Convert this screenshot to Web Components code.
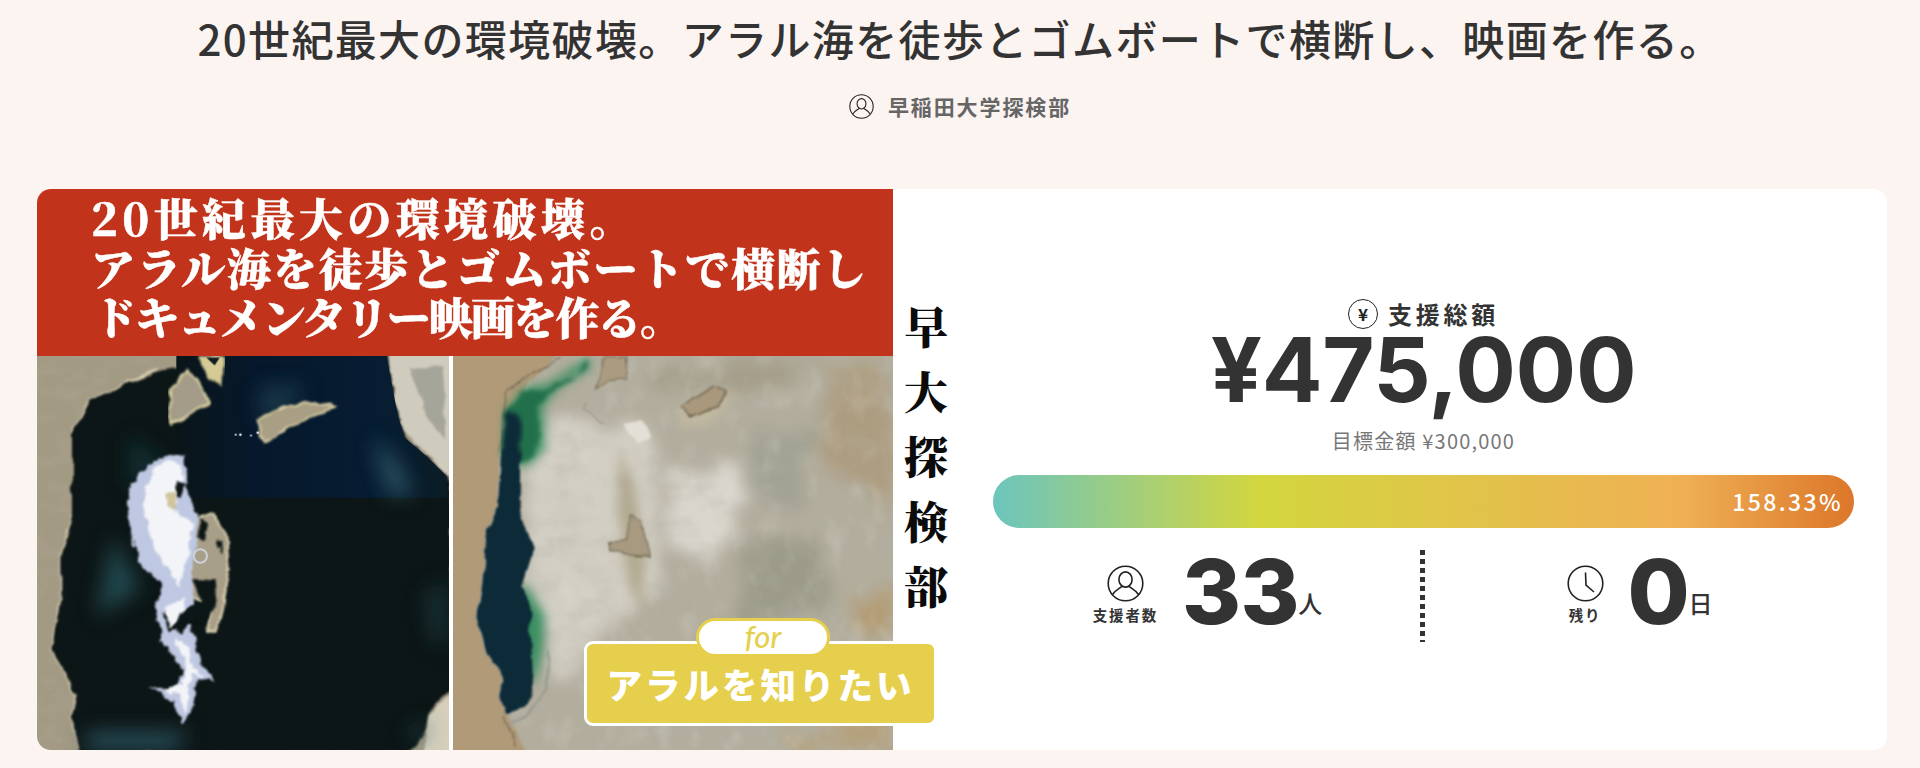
<!DOCTYPE html>
<html lang="ja"><head><meta charset="utf-8"><title>Campaign</title>
<style>
html,body{margin:0;background:#fcf4f1;color:#333;font-family:"Noto Sans CJK JP","Noto Sans",sans-serif}
body{height:768px;overflow:hidden}
</style></head><body>
<campaign-head></campaign-head>
<campaign-card></campaign-card>
<script>
function def(name, html){
  customElements.define(name, class extends HTMLElement{
    constructor(){super();this.attachShadow({mode:'open'}).innerHTML=html;}
  });
}
const ICON_PERSON=(s)=>`<svg width="${s}" height="${s}" viewBox="0 0 37 37" fill="none" stroke="#222" stroke-width="1.6" style="display:block"><circle cx="18.5" cy="18.5" r="17.3"/><ellipse cx="18.5" cy="14.5" rx="6.6" ry="7.6"/><path d="M5.5 29.5C8.5 25 12.5 23.6 15.2 21.2M31.5 29.5C28.5 25 24.5 23.6 21.8 21.2"/></svg>`;
const ICON_CLOCK=`<svg width="37" height="37" viewBox="0 0 37 37" fill="none" stroke="#222" stroke-width="1.6" style="display:block"><circle cx="18.5" cy="18.5" r="17.3"/><path d="M18.5 7.5L19 20L27 27"/></svg>`;

def('campaign-head',`<style>
:host{display:block;height:189px;box-sizing:border-box;padding-top:13px;text-align:center}
h1{margin:0;font:500 42px/50px "Noto Sans CJK JP",sans-serif;letter-spacing:1.37px;color:#333;white-space:nowrap}
.by{display:flex;justify-content:center;align-items:center;gap:14px;margin-top:25px;height:36px;font:700 21px/36px "Noto Sans CJK JP",sans-serif;letter-spacing:1.9px;color:#666}
</style><h1>20世紀最大の環境破壊。アラル海を徒歩とゴムボートで横断し、映画を作る。</h1>
<div class="by">${ICON_PERSON(25)}<span>早稲田大学探検部</span></div>`);

def('campaign-card',`<style>
:host{display:flex;margin:0 33px 0 37px;height:561px;background:#fff;border-radius:14px}
poster-image{flex:0 0 925px;min-width:0}
funding-panel{flex:1;min-width:0}
</style><poster-image></poster-image><funding-panel></funding-panel>`);

def('sat-before',`<style>:host{display:block;width:412px;height:394px;overflow:hidden;border-bottom-left-radius:14px}svg{display:block}</style>
<svg width="412" height="394" viewBox="22 20 1236 1182" preserveAspectRatio="none">
<defs>
<filter id="rough" x="-5%" y="-5%" width="110%" height="110%"><feTurbulence type="fractalNoise" baseFrequency="0.018" numOctaves="3" seed="4"/><feDisplacementMap in="SourceGraphic" scale="24" xChannelSelector="R" yChannelSelector="G"/><feGaussianBlur stdDeviation="3"/></filter>
<filter id="ice" x="-10%" y="-10%" width="120%" height="120%"><feTurbulence type="fractalNoise" baseFrequency="0.035" numOctaves="3" seed="8"/><feDisplacementMap in="SourceGraphic" scale="28" xChannelSelector="R" yChannelSelector="G"/><feGaussianBlur stdDeviation="2.5"/></filter>
<filter id="soft" x="-30%" y="-30%" width="160%" height="160%"><feGaussianBlur stdDeviation="30"/></filter>
<filter id="grain" x="0" y="0" width="100%" height="100%"><feTurbulence type="fractalNoise" baseFrequency="0.012 0.02" numOctaves="4" seed="9"/><feColorMatrix values="0 0 0 0 .42 0 0 0 0 .37 0 0 0 0 .28 1.6 0 0 0 -.62"/></filter>
<linearGradient id="navy" x1="0" x2="1"><stop offset="0" stop-color="#0a1519"/><stop offset=".28" stop-color="#06182b"/><stop offset=".75" stop-color="#071d33"/><stop offset="1" stop-color="#0b1d26"/></linearGradient>
</defs>
<rect x="22" y="20" width="1236" height="1182" fill="#a39a84"/>
<rect x="22" y="20" width="1236" height="1182" filter="url(#grain)" opacity=".7"/>
<path filter="url(#rough)" fill="#cfcbbd" d="M1060 0H1270V400L1180 300 1110 240 1090 110Z"/>
<path filter="url(#rough)" fill="#7f8078" d="M1140 60L1240 50 1250 270 1190 200Z" opacity=".5"/>
<path filter="url(#rough)" fill="#d5cfbc" d="M1180 1210L1200 1090 1270 1030V1210Z"/>
<path filter="url(#rough)" fill="none" stroke="#d5ccb0" stroke-width="8" d="M130 250L180 150 260 115 380 60M130 500L95 620 95 750 68 900 140 1040 125 1110 150 1200"/>
<path filter="url(#rough)" fill="#0a1519" d="M580 10H1075L1085 110 1105 200 1125 265 1190 320 1265 395V1020L1200 1080 1190 1150 1130 1210H150L125 1110 140 1040 68 900 95 750 95 620 130 500 130 250 180 150 260 115 380 70 440 55 475 100 425 225 540 165 575 120Z"/>
<path fill="url(#navy)" d="M440 20H1070L1105 200 1125 265 1190 320 1250 380V445H560L480 445 440 300Z"/>
<g filter="url(#soft)"><path fill="#24505f" opacity=".55" d="M690 110L830 110 760 200 690 210Z"/><path fill="#3a6c7a" opacity=".7" d="M1030 270L1090 320 1150 435 1080 435Z"/><path fill="#1a4a50" opacity=".5" d="M300 260L400 340 300 420Z"/><path fill="#2a5e66" opacity=".7" d="M250 560L330 720 200 800Z"/><path fill="#2f5a68" opacity=".9" d="M170 1150L480 1150 430 1200 170 1200Z"/><path fill="#1d4a52" opacity=".5" d="M1190 720L1250 700 1250 900 1200 860Z"/><path fill="#24505a" opacity=".7" d="M1130 1150L1190 1110 1180 1180Z"/></g>
<path filter="url(#rough)" fill="#a49c88" stroke="#ded6a6" stroke-width="7" d="M425 225L420 130 470 60 510 100 540 160Z"/>
<path filter="url(#rough)" fill="#d6cb95" d="M505 20H580L575 115 540 85Z"/>
<path fill="#101c20" d="M530 25L570 25 555 48Z"/>
<path filter="url(#rough)" fill="#a89f84" stroke="#ddd2a6" stroke-width="6" d="M685 210L780 170 860 155 915 175 840 200 770 240 705 282 690 260Z"/>
<g fill="#eef"><circle cx="618" cy="256" r="3"/><circle cx="632" cy="256" r="4"/><circle cx="664" cy="258" r="3"/><circle cx="684" cy="250" r="4"/></g>
<path filter="url(#rough)" fill="#a99f88" stroke="#ddd6b4" stroke-width="6" d="M470 520L550 490 590 560 597 660 578 770 558 850 535 850 550 780 470 740 430 680Z"/>
<path filter="url(#ice)" fill="#bfc8e2" d="M385 325L462 318 475 420 500 500 505 610 490 650 490 770 440 785 400 790 425 850 480 820 500 880 510 940 560 995 505 990 495 1060 462 1130 435 1062 362 1010 435 1022 465 960 400 885 375 770 400 700 335 655 310 570 290 430 335 370Z"/>
<path filter="url(#ice)" fill="#f3f4f8" d="M390 340L450 335 460 410 425 480 490 520 480 600 465 650 450 715 415 660 375 600 340 470 350 400ZM405 770L465 745 472 800 425 835ZM430 860L478 890 485 950 525 985 485 975 470 1090 445 1040 400 1015 455 1010 470 950Z"/>
<path filter="url(#rough)" fill="#0a1519" d="M490 690L555 690 560 760 535 830 480 810 460 850 430 830 470 780 515 760Z"/>
<path fill="#0a1519" filter="url(#rough)" d="M510 510L535 525 525 570 505 560ZM560 570L575 575 575 615 560 605ZM445 395L468 405 455 450 440 440Z"/>
<path fill="#c8b987" opacity=".8" filter="url(#rough)" d="M410 430L440 420 435 480 410 470Z"/>
<path fill="#a89f88" d="M500 590L570 590 570 690 485 680Z" filter="url(#rough)"/>
<circle cx="512" cy="620" r="20" fill="none" stroke="#cdd0d8" stroke-width="6"/>
</svg>`);

def('sat-after',`<style>:host{display:block;width:440px;height:394px;overflow:hidden}svg{display:block}</style>
<svg width="440" height="394" viewBox="10 20 1320 1182" preserveAspectRatio="none">
<defs>
<filter id="r" x="-5%" y="-5%" width="110%" height="110%"><feTurbulence type="fractalNoise" baseFrequency="0.016" numOctaves="3" seed="7"/><feDisplacementMap in="SourceGraphic" scale="22" xChannelSelector="R" yChannelSelector="G"/><feGaussianBlur stdDeviation="2.5"/></filter>
<filter id="rb" x="-10%" y="-10%" width="120%" height="120%"><feTurbulence type="fractalNoise" baseFrequency="0.02" numOctaves="3" seed="7"/><feDisplacementMap in="SourceGraphic" scale="30" xChannelSelector="R" yChannelSelector="G"/><feGaussianBlur stdDeviation="7"/></filter>
<filter id="s" x="-30%" y="-30%" width="160%" height="160%"><feGaussianBlur stdDeviation="16"/></filter>
<filter id="s2" x="-20%" y="-20%" width="140%" height="140%"><feTurbulence type="fractalNoise" baseFrequency="0.01" numOctaves="4" seed="3"/><feDisplacementMap in="SourceGraphic" scale="110" xChannelSelector="R" yChannelSelector="G"/><feGaussianBlur stdDeviation="22"/></filter>
<filter id="g" x="0" y="0" width="100%" height="100%"><feTurbulence type="fractalNoise" baseFrequency="0.01 0.016" numOctaves="5" seed="12"/><feColorMatrix values="0 0 0 0 .45 0 0 0 0 .44 0 0 0 0 .38 1.5 0 0 0 -.62"/></filter>
<filter id="v" x="0" y="0" width="100%" height="100%"><feTurbulence type="fractalNoise" baseFrequency="0.016 0.01" numOctaves="4" seed="21"/><feColorMatrix values="0 0 0 0 .9 0 0 0 0 .89 0 0 0 0 .86 2 0 0 0 -1.05"/><feGaussianBlur stdDeviation="3"/></filter>
</defs>
<rect x="10" y="20" width="1320" height="1182" fill="#b2ad9d"/>
<g filter="url(#s2)"><path fill="#d2cec3" d="M280 200L620 240 640 700 340 1000 240 800 220 400Z"/><path fill="#d9d6cd" d="M660 370L860 330 880 560 720 660 680 560Z"/><path fill="#a2a293" d="M900 240L1100 240 1040 480 900 420Z"/><path fill="#9c9b8a" d="M900 560L1120 560 1130 780 860 840Z"/><path fill="#ad9d80" d="M1130 60L1330 60 1330 500 1100 300Z"/><path fill="#b39d76" d="M1200 740L1330 700 1330 860 1240 860Z"/><path fill="#b5a07a" d="M1200 1080L1330 1050 1330 1200 1010 1200 1100 1130Z"/><path fill="#a59f8a" d="M600 30L1100 30 1000 130 620 130Z"/></g>
<rect x="10" y="20" width="1320" height="1182" filter="url(#g)" opacity=".5"/>
<rect x="10" y="20" width="1320" height="1182" filter="url(#v)" opacity=".22"/>
<path filter="url(#r)" fill="#b09a78" d="M0 0H340L230 110 165 190 150 330 145 470 110 540 95 700 80 800 105 900 160 990 145 1040 180 1110 230 1210H0Z"/>
<path filter="url(#r)" fill="none" stroke="#5e5545" stroke-width="3" d="M330 30L250 70 170 130 150 300M160 1100L200 1190"/>
<path filter="url(#r)" fill="none" stroke="#9d9d92" stroke-width="8" d="M300 900L292 1010 235 1100 180 1125"/>
<path filter="url(#s)" fill="#3b8f62" d="M420 20L420 60 330 110 280 170 285 300 230 350 170 340 170 190 220 120 300 100Z"/>
<path filter="url(#s)" fill="#3b8f62" d="M225 700L285 800 280 900 255 1000 180 960 160 800Z"/>
<path filter="url(#rb)" fill="#246f4c" d="M422 20L410 60 330 100 300 112 220 132 165 190 155 330 215 345 268 290 265 170 300 125 370 90Z"/>
<path filter="url(#rb)" fill="#0d2b38" d="M170 185L205 195 215 260 212 340 160 340 162 240Z"/>
<path filter="url(#r)" fill="#0d2b38" d="M158 300L212 310 210 480 252 600 218 710 245 780 245 880 250 1000 232 1075 170 1092 148 1040 162 990 108 900 83 800 98 700 112 540 148 470Z"/>
<path filter="url(#r)" fill="#ab9b80" stroke="#6b6250" stroke-width="3" d="M435 120L470 25 535 25 530 90 480 90Z"/>
<path filter="url(#s)" fill="#c8bda0" d="M680 190L760 130 860 130 790 220 700 235Z" opacity=".7"/>
<path filter="url(#r)" fill="#a9987c" stroke="#5f5744" stroke-width="4" d="M695 170L790 110 830 125 805 175 715 205Z"/>
<path filter="url(#r)" fill="#e2dfd6" d="M525 225L570 212 605 260 560 280Z"/>
<path fill="none" stroke="#8e887a" stroke-width="3" filter="url(#r)" d="M410 160L400 180 470 225"/>
<path filter="url(#s)" fill="#a89e80" d="M510 300L550 400 590 640 570 780 535 700 505 500Z" opacity=".75"/>
<path filter="url(#r)" fill="#a89a80" stroke="#5f5744" stroke-width="3" d="M545 495L575 520 600 625 540 620 480 605 480 580 530 570Z"/>
</svg>`);

def('poster-image',`<style>
:host{display:grid;position:relative;grid-template-columns:856px 69px;grid-template-rows:167px 394px}
.band{grid-column:1;grid-row:1;background:#c1341b;color:#fff;border-top-left-radius:14px;box-sizing:border-box;padding:4px 0 0 54px;font:900 44px/49.5px "Noto Serif CJK JP","Noto Sans CJK JP",serif;white-space:nowrap;-webkit-text-stroke:.5px #fff;filter:blur(.3px)}
.band div:nth-child(1){letter-spacing:4.4px}
.band div:nth-child(2){letter-spacing:1.8px}
.band div:nth-child(3){letter-spacing:-1.8px;margin-left:2px}
.photos{grid-column:1;grid-row:2;display:flex;justify-content:space-between}
.side{grid-column:2;grid-row:1/3;writing-mode:vertical-rl;box-sizing:border-box;padding:116px 4px 0 0;font:900 44px/65px "Noto Serif CJK JP","Noto Sans CJK JP",serif;letter-spacing:21px;color:#0b0b0b}
.badge{position:absolute;left:547px;top:452px;width:353px;height:85px;box-sizing:border-box;background:#e6cf4c;border:3px solid #fff;border-radius:9px;color:#fff;font:700 35.5px/85px "Noto Sans CJK JP",sans-serif;letter-spacing:3px;text-align:center;white-space:nowrap}
.badge b{display:block;line-height:80px}
.for{position:absolute;left:109px;top:-26px;width:134px;height:39px;box-sizing:border-box;background:#fff;border:3px solid #e6cf4c;border-radius:20px;color:#e6cf4c;font:italic 500 31px/30px Lato,"Open Sans",sans-serif;letter-spacing:0;text-align:center}
</style>
<div class="band"><div>20世紀最大の環境破壊。</div><div>アラル海を徒歩とゴムボートで横断し</div><div>ドキュメンタリー映画を作る。</div></div>
<div class="photos"><sat-before></sat-before><sat-after></sat-after></div>
<div class="side">早大探検部</div>
<div class="badge"><span class="for">for</span><b>アラルを知りたい</b></div>`);

def('gradient-bar',`<style>
:host{display:flex;justify-content:flex-end;align-items:center;height:53px;border-radius:27px;box-sizing:border-box;padding:0 11px;color:#fff;background:linear-gradient(90deg,#6cc5bd 0%,#d3d63f 31%,#efb054 80%,#dc772a 100%);font:500 23px/53px "Noto Sans CJK JP",sans-serif;letter-spacing:2.4px}
</style><slot></slot>`);

def('stat-block',`<style>
:host{flex:1;display:flex;justify-content:center;align-items:flex-start}
.k{display:flex;flex-direction:column;align-items:center;margin-top:15px;font:700 14.5px/20px "Noto Sans CJK JP",sans-serif;letter-spacing:1.8px;color:#333;white-space:nowrap}
.k span{margin-top:3px}
.v{font:800 90px/88px Inter,"Liberation Sans",sans-serif;margin:-2px 0 0 24px;letter-spacing:-.5px;color:#333}
.u{font:500 24px/26px "Noto Sans CJK JP",sans-serif;margin:40px 0 0 -1px;color:#333;align-self:flex-start}
</style><div class="k"><slot name="icon"></slot><span><slot name="label"></slot></span></div><div class="v"><slot name="value"></slot></div><div class="u"><slot name="unit"></slot></div>`);

def('funding-panel',`<style>
:host{display:block;box-sizing:border-box;padding:110px 33px 0 31px;text-align:center;color:#333}
.label{display:flex;justify-content:center;align-items:center;gap:10px;height:30px;font:700 24px/30px "Noto Sans CJK JP",sans-serif;letter-spacing:3.7px}
.yen{width:30px;height:30px;border:1.6px solid #222;border-radius:50%;box-sizing:border-box;font:700 17px/27px "Noto Sans CJK JP",sans-serif;letter-spacing:0;color:#222;text-align:center}
.amt{font:700 90px/96px Inter,"Liberation Sans",sans-serif;margin-top:-7px;letter-spacing:-.4px;color:#333}
.goal{font:400 20px/26px "Noto Sans CJK JP",sans-serif;letter-spacing:1.2px;color:#777;margin-top:10px}
gradient-bar{margin-top:21px}
.stats{display:flex;margin-top:22px;height:92px}
.rule{flex:0 0 5px;height:92px;margin-left:-2px;background:repeating-linear-gradient(180deg,#333 0 5px,transparent 5px 9px)}
svg{display:block}
</style>
<div class="label"><div class="yen">¥</div><span>支援総額</span></div>
<div class="amt">¥475,000</div>
<div class="goal">目標金額 ¥300,000</div>
<gradient-bar>158.33%</gradient-bar>
<div class="stats">
<stat-block><div slot="icon">${ICON_PERSON(37)}</div><span slot="label">支援者数</span><span slot="value">33</span><span slot="unit">人</span></stat-block>
<div class="rule"></div>
<stat-block><div slot="icon">${ICON_CLOCK}</div><span slot="label">残り</span><span slot="value">0</span><span slot="unit">日</span></stat-block>
</div>`);
</script>
</body></html>
